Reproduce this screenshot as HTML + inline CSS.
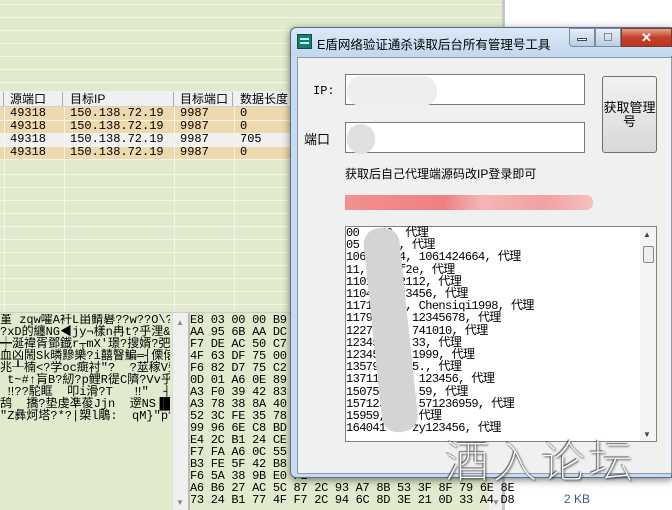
<!DOCTYPE html>
<html><head><meta charset="utf-8"><style>
*{margin:0;padding:0;box-sizing:border-box}
html{width:672px;height:510px;overflow:hidden}
body{width:672px;height:510px;overflow:hidden;position:relative;background:#e2eacd;font-family:"Liberation Sans","Noto Sans CJK SC",sans-serif;font-size:12px}
.abs{position:absolute}
.hl{position:absolute;left:0;width:505px;height:1px;background:#f4f6ee}
.vl{position:absolute;width:1px;background:#f4f6ee}
.mono{font-family:"Liberation Mono","Noto Sans CJK SC",monospace}
.row{position:absolute;left:0;width:290px;height:13px;font-family:"Liberation Mono",monospace;font-size:12px;line-height:13px}
.row span{position:absolute}
</style></head><body>
<div class="hl" style="top:4px"></div><div class="hl" style="top:17px"></div><div class="hl" style="top:30px"></div><div class="hl" style="top:43px"></div><div class="hl" style="top:56px"></div><div class="hl" style="top:69px"></div><div class="hl" style="top:82px"></div>
<div class="abs" style="left:0;top:91px;width:300px;height:16px;background:#f0f0f0;border-bottom:1px solid #d0d0d0"></div>
<div class="abs" style="left:3px;top:92px;width:1px;height:14px;background:#aaa"></div>
<div class="abs" style="left:62px;top:92px;width:1px;height:14px;background:#aaa"></div>
<div class="abs" style="left:173px;top:92px;width:1px;height:14px;background:#aaa"></div>
<div class="abs" style="left:232px;top:92px;width:1px;height:14px;background:#aaa"></div>
<div class="abs" style="left:10px;top:91px;font-size:12px;line-height:16px">源端口</div>
<div class="abs" style="left:70px;top:91px;font-size:12px;line-height:16px">目标IP</div>
<div class="abs" style="left:180px;top:91px;font-size:12px;line-height:16px">目标端口</div>
<div class="abs" style="left:240px;top:91px;font-size:12px;line-height:16px">数据长度</div>
<div class="row" style="top:107px;background:#eed8ae"><span style="left:10px">49318</span><span style="left:70px">150.138.72.19</span><span style="left:180px">9987</span><span style="left:240px">0</span></div>
<div class="row" style="top:120px;background:#eed8ae"><span style="left:10px">49318</span><span style="left:70px">150.138.72.19</span><span style="left:180px">9987</span><span style="left:240px">0</span></div>
<div class="row" style="top:133px;background:#f0f0f0"><span style="left:10px">49318</span><span style="left:70px">150.138.72.19</span><span style="left:180px">9987</span><span style="left:240px">705</span></div>
<div class="row" style="top:146px;background:#eed8ae"><span style="left:10px">49318</span><span style="left:70px">150.138.72.19</span><span style="left:180px">9987</span><span style="left:240px">0</span></div>
<div class="vl" style="left:4px;top:107px;height:205px"></div><div class="vl" style="left:64px;top:107px;height:205px"></div><div class="vl" style="left:174px;top:107px;height:205px"></div><div class="vl" style="left:234px;top:107px;height:205px"></div>
<div class="hl" style="top:120px"></div><div class="hl" style="top:133px"></div><div class="hl" style="top:146px"></div><div class="hl" style="top:159px"></div><div class="hl" style="top:174px"></div><div class="hl" style="top:187px"></div><div class="hl" style="top:200px"></div><div class="hl" style="top:213px"></div><div class="hl" style="top:226px"></div><div class="hl" style="top:239px"></div><div class="hl" style="top:252px"></div><div class="hl" style="top:265px"></div><div class="hl" style="top:278px"></div><div class="hl" style="top:291px"></div><div class="hl" style="top:304px"></div>
<div class="abs" style="left:502px;top:0;width:3px;height:510px;background:#c8c8c8"></div>
<div class="abs" style="left:505px;top:0;width:167px;height:510px;background:#fff"></div>
<div class="abs" style="left:564px;top:492px;color:#3a5a8a;font-size:12px">2 KB</div>
<div class="abs" style="left:0;top:312px;width:502px;height:198px;background:#e2eacd;border-top:1px solid #ccc"></div>
<div class="abs" style="left:172px;top:313px;width:16px;height:197px;background:#f0f0f0;border-left:1px solid #ddd"></div>
<div class="abs" style="left:176px;top:318px;font-size:8px;color:#888">▲</div>
<div class="abs" style="left:176px;top:498px;font-size:8px;color:#888">▼</div>
<div class="abs" style="left:188px;top:313px;width:2px;height:197px;background:#bbb"></div>
<div class="abs" style="left:489px;top:470px;width:13px;height:40px;background:#f0f0f0"></div>
<div class="abs" style="left:492px;top:498px;font-size:8px;color:#888">▼</div>
<div class="abs mono" style="left:0;top:314px;width:170px;height:196px;font-size:12px;line-height:12px;white-space:pre;overflow:hidden">堇 zqw嚯A衦L畄鲭礜??w??O\?  ?
?xD的纏NG◀jy¬樣n冉t?乎浬&amp;┴蠻
┿涎禕胥鄧鐡r┬mX′璟?搜婿?弝n
血凶鬧Sk暽黲樂?i囍瞖鯿═┤傈偯罰
兆┸楠&lt;?学oc癍衬″?  ?莁稼V旁
 t~#↑肓B?紉?p鲤R徥C隮?Vv乎?#┐.
 ‼??駝眶  叩i滑?T   ‼″  ┤?寄膜
鸹  撟?垫虔凖葰Jjn  遻NS▐█?陆
"Z彝炣塔?*?|槊l鵰:  qM}"p?↨</div>
<div class="abs mono" style="left:190px;top:314px;width:300px;font-size:12px;line-height:12px;white-space:pre;letter-spacing:-0.3px">E8 03 00 00 B9 02 
AA 95 6B AA DC 91 
F7 DE AC 50 C7 15 
4F 63 DF 75 00 7A 
F6 82 D7 75 C2 01 
0D 01 A6 0E 89 78 
A3 F0 39 42 83 11 
A3 78 38 8A 40 75 
52 3C FE 35 78 44 
99 96 6E C8 BD 74 
E4 2C B1 24 CE D2 
F7 FA A6 0C 55 97 
B3 FE 5F 42 B8 30 
F6 5A 38 9B E0 F1 
A6 B6 27 AC 5C 87 2C 93 A7 8B 53 3F 8F 79 6E 8E
73 24 B1 77 4F F7 2C 94 6C 8D 3E 21 0D 33 A4 D8</div>
<div class="abs" style="left:290px;top:27px;width:382px;height:451px;background:#c6dbf0;border:1px solid #5a6f88;border-radius:6px 0 0 6px;box-shadow:0 2px 8px rgba(0,0,0,.5)"></div>
<div class="abs" style="left:291px;top:28px;width:381px;height:28px;background:linear-gradient(#dbe9f7,#c2d8ef);border-radius:6px 0 0 0"></div>
<div class="abs" style="left:297px;top:34px;width:15px;height:15px;background:#1a7a76;border:1px solid #0c4c4a"><div style="margin:3px 2px;height:2px;background:#bfe;box-shadow:0 4px 0 #bfe"></div></div>
<div class="abs" style="left:317px;top:34px;font-size:12.5px;color:#000">E盾网络验证通杀读取后台所有管理号工具</div>
<div class="abs" style="left:569px;top:28px;width:26px;height:19px;background:linear-gradient(#e6eef8,#bccde2);border:1px solid #7a8aa0;border-radius:0 0 0 4px"><div style="margin:9px 7px 0;height:3px;background:#fff;border:1px solid #445"></div></div>
<div class="abs" style="left:595px;top:28px;width:26px;height:19px;background:linear-gradient(#e6eef8,#bccde2);border:1px solid #7a8aa0"><div style="margin:4px 8px;height:8px;border:1px solid #889"></div></div>
<div class="abs" style="left:621px;top:28px;width:51px;height:19px;background:linear-gradient(#e8a093,#c4402a 50%,#b83820);border:1px solid #7a3a30;color:#fff;font-weight:bold;text-align:center;font-size:13px;line-height:17px">✕</div>
<div class="abs" style="left:297px;top:57px;width:375px;height:417px;background:#f0f0f0;border:1px solid #8a9ab0"></div>
<div class="abs mono" style="left:313px;top:84px;font-size:12px">IP:</div>
<div class="abs" style="left:345px;top:74px;width:240px;height:31px;background:#fff;border:1px solid #7a7a7a"></div>
<div class="abs" style="left:347px;top:76px;width:90px;height:30px;background:#eee;border-radius:14px"></div>
<div class="abs" style="left:304px;top:129px;font-size:13px">端口</div>
<div class="abs" style="left:345px;top:122px;width:240px;height:31px;background:#fff;border:1px solid #7a7a7a"></div>
<div class="abs" style="left:347px;top:124px;width:28px;height:30px;background:#e0e0e0;border-radius:14px"></div>
<div class="abs" style="left:602px;top:76px;width:55px;height:77px;background:linear-gradient(#f2f2f2,#d8d8d8);border:1px solid #707070;border-radius:3px;text-align:center;font-size:13px;line-height:14px;padding-top:24px">获取管理号</div>
<div class="abs" style="left:345px;top:165px;font-size:12px">获取后自己代理端源码改IP登录即可</div>
<div class="abs" style="left:345px;top:195px;width:248px;height:15px;background:linear-gradient(90deg,#f29090,#f08080 40%,#f5b5b5 55%,#f3a0a0 80%,#f5c0c0);border-radius:0 7px 7px 0"></div>
<div class="abs" style="left:345px;top:226px;width:312px;height:216px;background:#fff;border:1px solid #828282"></div>
<div class="abs" style="left:640px;top:227px;width:16px;height:214px;background:#f4f4f4"></div>
<div class="abs" style="left:643px;top:230px;font-size:8px;color:#444">▲</div>
<div class="abs" style="left:643px;top:246px;width:11px;height:17px;background:#eee;border:1px solid #888;border-radius:2px"></div>
<div class="abs" style="left:643px;top:430px;font-size:8px;color:#444">▼</div>
<div class="abs mono" style="left:346px;top:227px;font-size:12px;line-height:12.2px;white-space:pre;letter-spacing:-0.6px">00    6, 代理
05    14, 代理
106    64, 1061424664, 代理
11,    1f2e, 代理
1101    2112, 代理
1104    23456, 代理
11717    , Chensiqi1998, 代理
11791     12345678, 代理
12274     741010, 代理
123456    33, 代理
123456    1999, 代理
13579,    5., 代理
137113     123456, 代理
150759,    59, 代理
157123     571236959, 代理
15959,     代理
164041    zy123456, 代理</div>
<div class="abs" style="left:362px;top:228px;width:36px;height:205px;background:#d4d4d4;border-radius:16px;transform:rotate(-6deg);transform-origin:top"></div>
<div class="abs" style="left:445px;top:438px;font-size:44px;line-height:50px;color:#fff;letter-spacing:4px;text-shadow:1px 1px 2px #333,-1px -1px 1px #555;font-weight:100">酒入论坛</div>
</body></html>
